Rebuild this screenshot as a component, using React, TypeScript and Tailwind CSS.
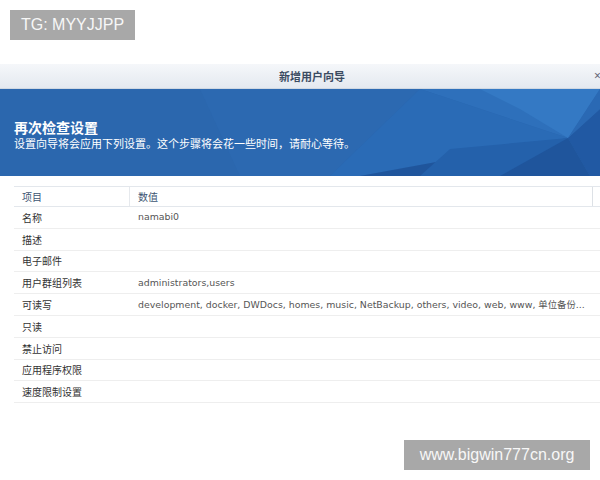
import React from 'react';

const rows: { label: string; value: string }[] = [
  { label: '名称', value: 'namabi0' },
  { label: '描述', value: '' },
  { label: '电子邮件', value: '' },
  { label: '用户群组列表', value: 'administrators,users' },
  {
    label: '可读写',
    value: 'development, docker, DWDocs, homes, music, NetBackup, others, video, web, www, 单位备份...',
  },
  { label: '只读', value: '' },
  { label: '禁止访问', value: '' },
  { label: '应用程序权限', value: '' },
  { label: '速度限制设置', value: '' },
];

const cjk = "font-['Noto_Sans_CJK_SC',sans-serif]";
const cell = "font-['DejaVu_Sans','Noto_Sans_CJK_SC',sans-serif]";

const BannerArt: React.FC = () => (
  <svg className="absolute inset-0 h-full w-full" viewBox="0 0 600 87" preserveAspectRatio="none">
    <polygon points="200,0 420,0 330,87 240,87" fill="#2c69b1" />
    <polygon points="420,0 600,0 568,49" fill="#2e70bb" />
    <polygon points="420,0 568,49 360,87 330,87" fill="#2a6bb6" />
    <polygon points="480,0 600,0 568,49 520,20" fill="#3479c4" />
    <polygon points="568,49 600,20 600,87 590,87" fill="#2159a3" />
    <polygon points="568,49 590,87 360,87" fill="#1f559c" />
    <polygon points="450,60 568,49 500,87 420,87" fill="#2461ab" />
    <polygon points="568,49 600,0 600,20" fill="#2a69b4" />
  </svg>
);

export default function App() {
  return (
    <div className="relative h-[480px] w-[600px] overflow-hidden bg-white">
      <div className="ml-[10px] mt-[10px] flex h-[30px] w-[125px] items-center justify-center bg-[#a8a8a8] font-['Liberation_Sans',sans-serif] text-[16px] text-[#f7f7f7]">
        TG: MYYJJPP
      </div>

      <div className="mt-[24px] flex h-[25px] items-center border-b border-[#cfd8e3] bg-gradient-to-b from-[#f5f7fa] to-[#e4e9f0] pl-[30px]">
        <div className={`flex-1 text-center text-[11px] font-semibold text-[#3b4b62] ${cjk}`}>新增用户向导</div>
        <div className="w-[6px] overflow-hidden text-[12px] leading-none text-[#667]">×</div>
      </div>

      <div className="relative h-[87px] bg-[#2b67ae]">
        <BannerArt />
        <div className={`relative flex h-full flex-col justify-center pl-[14px] pt-[2px] text-white ${cjk}`}>
          <div className="text-[14px] font-bold leading-[18px]">再次检查设置</div>
          <div className="text-[11px] leading-[14px]">设置向导将会应用下列设置。这个步骤将会花一些时间，请耐心等待。</div>
        </div>
      </div>

      <div className="ml-[14px] mt-[10px]">
        <div className="flex h-[21px] items-center border-y border-[#e3e7ec] text-[10px] text-[#3d5572]">
          <div className={`flex h-full w-[116px] items-center border-r border-[#e6e9ed] pl-[8px] ${cjk}`}>项目</div>
          <div className={`flex h-full w-[463px] items-center border-r border-[#dde1e6] pl-[8px] ${cjk}`}>数值</div>
        </div>
        {rows.map((r) => (
          <div key={r.label} className="flex h-[21.8px] items-center border-b border-[#eeeeee] text-[10px]">
            <div className={`w-[116px] pl-[8px] text-[#333] ${cjk}`}>{r.label}</div>
            <div className={`flex-1 truncate pl-[8px] pr-[4px] text-[9.4px] text-[#555] ${cell}`}>{r.value}</div>
          </div>
        ))}
      </div>

      <div className="absolute left-[404px] top-[440px] flex h-[30px] w-[186px] items-center justify-center bg-[#a8a8a8] font-['Liberation_Sans',sans-serif] text-[16px] text-[#f7f7f7]">
        www.bigwin777cn.org
      </div>
    </div>
  );
}
